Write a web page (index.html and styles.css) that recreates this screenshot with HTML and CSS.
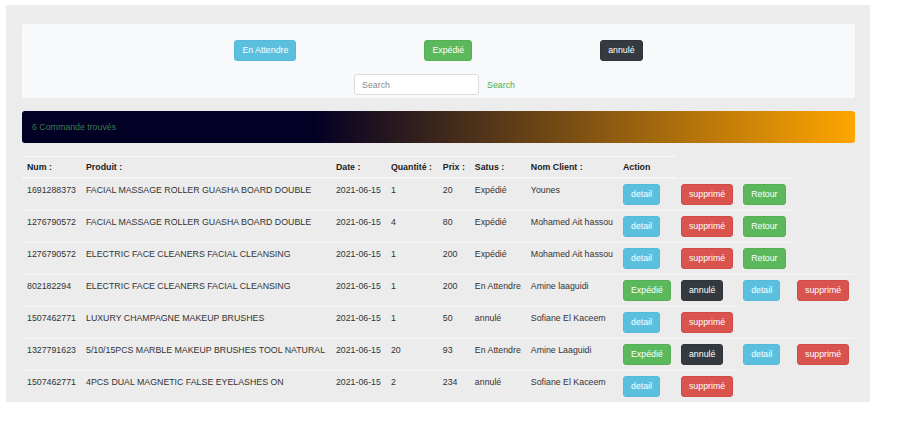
FILE: index.html
```html
<!DOCTYPE html>
<html lang="fr">
<head>
<meta charset="utf-8">
<title>Commandes</title>
<link rel="stylesheet" href="styles.css">
</head>
<body>
<div class="page">
  <div class="filters">
    <div class="status-row">
      <button class="btn btn-info">En Attendre</button>
      <button class="btn btn-success">Expédié</button>
      <button class="btn btn-dark">annulé</button>
    </div>
    <div class="search-row">
      <input class="search-input" type="text" placeholder="Search">
      <a class="search-link">Search</a>
    </div>
  </div>
  <div class="banner">6 Commande trouvés</div>
  <table class="orders">
    <colgroup>
      <col class="w-num"><col class="w-prod"><col class="w-date"><col class="w-qty"><col class="w-prix"><col class="w-stat"><col class="w-nom"><col class="w-act"><col class="w-a2"><col class="w-a3"><col class="w-a4">
    </colgroup>
    <thead>
      <tr><th>Num :</th><th>Produit :</th><th>Date :</th><th>Quantité :</th><th>Prix :</th><th>Satus :</th><th>Nom Client :</th><th>Action</th></tr>
    </thead>
    <tbody>
      <tr><td>1691288373</td><td>FACIAL MASSAGE ROLLER GUASHA BOARD DOUBLE</td><td>2021-06-15</td><td>1</td><td>20</td><td>Expédié</td><td>Younes</td>
        <td><button class="btn btn-info">detail</button></td><td><button class="btn btn-danger">supprimé</button></td><td><button class="btn btn-success">Retour</button></td></tr>
      <tr><td>1276790572</td><td>FACIAL MASSAGE ROLLER GUASHA BOARD DOUBLE</td><td>2021-06-15</td><td>4</td><td>80</td><td>Expédié</td><td>Mohamed Ait hassou</td>
        <td><button class="btn btn-info">detail</button></td><td><button class="btn btn-danger">supprimé</button></td><td><button class="btn btn-success">Retour</button></td></tr>
      <tr><td>1276790572</td><td>ELECTRIC FACE CLEANERS FACIAL CLEANSING</td><td>2021-06-15</td><td>1</td><td>200</td><td>Expédié</td><td>Mohamed Ait hassou</td>
        <td><button class="btn btn-info">detail</button></td><td><button class="btn btn-danger">supprimé</button></td><td><button class="btn btn-success">Retour</button></td></tr>
      <tr><td>802182294</td><td>ELECTRIC FACE CLEANERS FACIAL CLEANSING</td><td>2021-06-15</td><td>1</td><td>200</td><td>En Attendre</td><td>Amine laaguidi</td>
        <td><button class="btn btn-success">Expédié</button></td><td><button class="btn btn-dark">annulé</button></td><td><button class="btn btn-info">detail</button></td><td><button class="btn btn-danger">supprimé</button></td></tr>
      <tr><td>1507462771</td><td>LUXURY CHAMPAGNE MAKEUP BRUSHES</td><td>2021-06-15</td><td>1</td><td>50</td><td>annulé</td><td>Sofiane El Kaceem</td>
        <td><button class="btn btn-info">detail</button></td><td><button class="btn btn-danger">supprimé</button></td></tr>
      <tr><td>1327791623</td><td>5/10/15PCS MARBLE MAKEUP BRUSHES TOOL NATURAL</td><td>2021-06-15</td><td>20</td><td>93</td><td>En Attendre</td><td>Amine Laaguidi</td>
        <td><button class="btn btn-success">Expédié</button></td><td><button class="btn btn-dark">annulé</button></td><td><button class="btn btn-info">detail</button></td><td><button class="btn btn-danger">supprimé</button></td></tr>
      <tr><td>1507462771</td><td>4PCS DUAL MAGNETIC FALSE EYELASHES ON</td><td>2021-06-15</td><td>2</td><td>234</td><td>annulé</td><td>Sofiane El Kaceem</td>
        <td><button class="btn btn-info">detail</button></td><td><button class="btn btn-danger">supprimé</button></td></tr>
    </tbody>
  </table>
</div>
</body>
</html>
```

FILE: styles.css
```css
* { box-sizing: border-box; }
html, body { margin: 0; padding: 0; background: #ffffff; }
body {
  font-family: "Liberation Sans", Arial, sans-serif;
  font-size: 8.8px;
  color: #333333;
}
.page {
  width: 864px;
  margin: 5px 0 0 6px;
  padding: 19px 15px 0 16px;
  background: #ececec;
}
.filters {
  background: #f8f9fa;
  padding: 16px 0 3px;
  border-radius: 2px;
}
.status-row {
  display: flex;
  justify-content: center;
  gap: 128px;
}
.search-row {
  display: flex;
  justify-content: center;
  align-items: center;
  gap: 8px;
  margin-top: 13px;
}
.btn {
  display: inline-block;
  vertical-align: top;
  font-family: "Liberation Sans", Arial, sans-serif;
  font-size: 8.8px;
  line-height: 13px;
  padding: 3px 7px;
  border: 1px solid transparent;
  border-radius: 3px;
  color: #ffffff;
  cursor: pointer;
}
.btn-info { background: #5bc0de; border-color: #56bad8; }
.btn-success { background: #5cb85c; border-color: #55b055; }
.btn-danger { background: #d9534f; border-color: #d14b47; }
.btn-dark { background: #343a40; border-color: #2f353a; }
.search-input {
  width: 125px;
  height: 21px;
  border: 1px solid #dcdcdc;
  border-radius: 3px;
  padding: 0 7px;
  font-family: "Liberation Sans", Arial, sans-serif;
  font-size: 8.8px;
  color: #555;
  background: #ffffff;
}
.search-input::placeholder { color: #8a8a8a; }
.search-link {
  color: #4cae4c;
  font-size: 8.8px;
  margin-right: 8px;
}
.banner {
  margin-top: 13px;
  height: 32px;
  line-height: 32px;
  padding-left: 10px;
  border-radius: 3px;
  color: #3f7a4f;
  background: linear-gradient(90deg, #020024 0%, #020024 35%, #ffa500 100%);
}
.orders {
  margin-top: 13px;
  border-collapse: collapse;
}
.orders th, .orders td {
  text-align: left;
  vertical-align: top;
  white-space: nowrap;
  line-height: 12px;
}
.orders th {
  font-weight: bold;
  color: #222222;
  padding: 4px 5px;
  border-top: 1px solid #f6f6f6;
  border-bottom: 2px solid #f6f6f6;
}
.orders td {
  padding: 5px;
  border-top: 1px solid #f6f6f6;
}
.w-num { width: 59px; }
.w-prod { width: 250px; }
.w-date { width: 55px; }
.w-qty { width: 52px; }
.w-prix { width: 32px; }
.w-stat { width: 56px; }
.w-nom { width: 92px; }
.w-act { width: 58px; }
.w-a2 { width: 62px; }
.w-a3 { width: 54px; }
.w-a4 { width: 63px; }
```
